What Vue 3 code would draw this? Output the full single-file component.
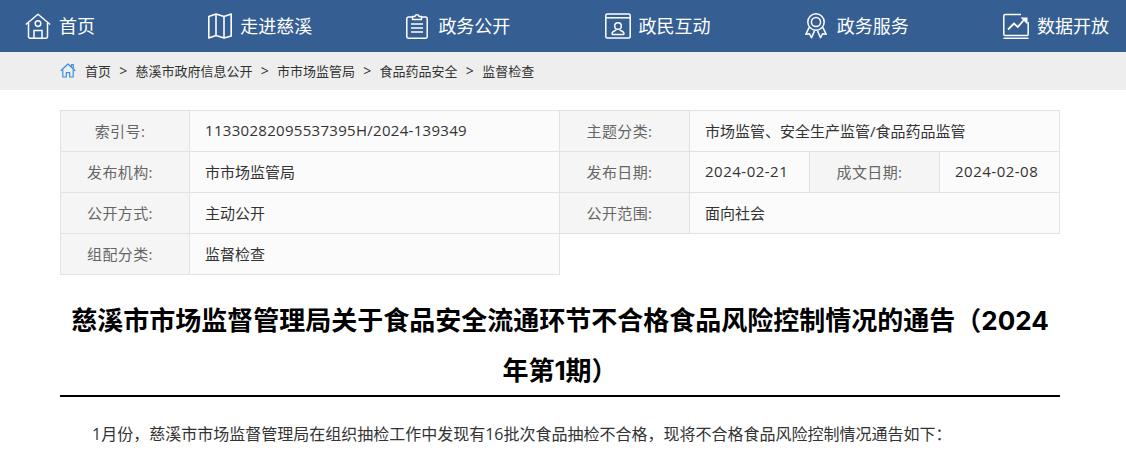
<script setup>
const rows = [
  { cells: [
    { t: '索引号:', l: true, c: 'a' },
    { t: '11330282095537395H/2024-139349', c: 'b code' },
    { t: '主题分类:', l: true, c: 'a' },
    { t: '市场监管、安全生产监管/食品药品监管', c: 'w' }
  ] },
  { cells: [
    { t: '发布机构:', l: true, c: 'a' },
    { t: '市市场监管局', c: 'b' },
    { t: '发布日期:', l: true, c: 'a' },
    { t: '2024-02-21', c: 'd' },
    { t: '成文日期:', l: true, c: 'a' },
    { t: '2024-02-08', c: 'd' }
  ] },
  { cells: [
    { t: '公开方式:', l: true, c: 'a' },
    { t: '主动公开', c: 'b' },
    { t: '公开范围:', l: true, c: 'a' },
    { t: '面向社会', c: 'w' }
  ] },
  { cells: [
    { t: '组配分类:', l: true, c: 'a' },
    { t: '监督检查', c: 'b' }
  ] }
]
const crumbs = ['慈溪市政府信息公开', '市市场监管局', '食品药品安全', '监督检查']
</script>

<template>
  <div class="page">
    <nav class="nav">
      <a class="item first">
        <svg class="ico" viewBox="0 0 26 26" fill="none" stroke="#fff" stroke-width="1.5">
          <path d="M.8 11.5 13 1.2l12.2 10.3" stroke-linejoin="round" />
          <path d="M3.5 10v13.8a1.4 1.4 0 0 0 1.4 1.4h16.2a1.4 1.4 0 0 0 1.4-1.4V10" />
          <circle cx="13" cy="10.6" r="2.8" />
          <path d="M9 25v-7.5h8V25" />
        </svg>
        <span>首页</span>
      </a>
      <a class="item">
        <svg class="ico map" viewBox="0 0 24 26" fill="none" stroke="#fff" stroke-width="1.6" stroke-linejoin="round">
          <path d="M.8 3.4 8 1l8 2.4L23.2 1v22L16 25l-8-2.4L.8 25z" />
          <path d="M8 1v21.6M16 3.4V25" />
        </svg>
        <span>走进慈溪</span>
      </a>
      <a class="item">
        <svg class="ico clip" viewBox="0 0 22 26" fill="none" stroke="#fff" stroke-width="1.5">
          <path d="M6.5 4H2.6A1.8 1.8 0 0 0 .8 5.8v18a1.4 1.4 0 0 0 1.4 1.4h17.6a1.4 1.4 0 0 0 1.4-1.4v-18A1.8 1.8 0 0 0 19.4 4h-3.900" />
          <path d="M6.500 6.500V3.500h2.300a2.300 2.300 0 0 1 4.400 0h2.300v3z" stroke-linejoin="round" />
          <path d="M5 11h12M5 15h12M5 19h12" stroke-width="1.700" />
        </svg>
        <span>政务公开</span>
      </a>
      <a class="item">
        <svg class="ico" viewBox="0 0 26 26" fill="none" stroke="#fff" stroke-width="1.5">
          <rect x=".8" y="1" width="24.400" height="24" rx="1.500" />
          <path d="M.8 4.800h24.400" />
          <circle cx="13" cy="13" r="3.300" />
          <path d="M7 21.500v-.8c0-2 2.500-3 4.300-3.700M19 21.500v-.8c0-2-2.500-3-4.300-3.700M7 21.500h12" />
        </svg>
        <span>政民互动</span>
      </a>
      <a class="item">
        <svg class="ico award" viewBox="0 0 22 26" fill="none" stroke="#fff" stroke-width="1.500">
          <circle cx="11" cy="9" r="8.200" />
          <circle cx="11" cy="9" r="4.600" />
          <path d="M4.300 14.200.8 21.300l3.700-.5 2 3.900 3-6.800M17.700 14.200l3.500 7.100-3.700-.5-2 3.900-3-6.800" stroke-linejoin="round" />
        </svg>
        <span>政务服务</span>
      </a>
      <a class="item">
        <svg class="ico" viewBox="0 0 26 26" fill="none" stroke="#fff" stroke-width="1.500">
          <path d="M18 1.500H2.200A1.400 1.400 0 0 0 .8 2.900v18.300a1.400 1.400 0 0 0 1.400 1.400h21.600a1.400 1.400 0 0 0 1.400-1.400V9" />
          <path d="M5 16.500l6-6 3.800 3.500 6-7" stroke-width="1.800" />
          <path d="M17.500 4.500h7v7z" fill="#fff" stroke="none" />
          <path d="M.5 25.300h25" stroke-width="1.500" />
        </svg>
        <span>数据开放</span>
      </a>
    </nav>

    <div class="crumb">
      <svg class="home" viewBox="0 0 16 15" fill="none" stroke="#3b8fdc" stroke-width="1.200" stroke-linejoin="round">
        <path d="M.7 7.800 8 1l7.300 6.800" />
        <path d="M11.500 3.700V1.600h1.800v3.800" />
        <path d="M2.800 6.500v7.500h3.500V9.700h3.400V14h3.500V6.500" />
      </svg>
      <span class="cr">首页</span>
      <template v-for="c in crumbs" :key="c">
        <span class="sep">&gt;</span>
        <span class="cr">{{ c }}</span>
      </template>
    </div>

    <main class="main">
      <div class="table">
        <template v-for="(r, i) in rows" :key="i">
          <div
            v-for="(cell, j) in r.cells"
            :key="j"
            class="cell"
            :class="[cell.c, { label: cell.l, top: i === 0, left: j === 0 }]"
          >{{ cell.t }}</div>
        </template>
      </div>

      <h1 class="title">慈溪市市场监督管理局关于食品安全流通环节不合格食品风险控制情况的通告（2024年第1期）</h1>

      <p class="para">1月份，慈溪市市场监督管理局在组织抽检工作中发现有16批次食品抽检不合格，现将不合格食品风险控制情况通告如下：</p>
    </main>
  </div>
</template>

<style>
html, body { margin: 0; background: #fff; overflow: hidden; }
</style>

<style scoped>
.page {
  width: 1126px;
  height: 451px;
  overflow: hidden;
  font-family: "Open Sans", "Noto Sans CJK SC", sans-serif;
}
.nav {
  display: flex;
  justify-content: space-between;
  align-items: center;
  height: 52px;
  padding: 0 17px 0 25px;
  background: #355e92;
  box-sizing: border-box;
}
.item {
  display: flex;
  align-items: center;
  gap: 8px;
  color: #fff;
  font-size: 18px;
  white-space: nowrap;
}
.item span { margin-bottom: 2px; }
.first { width: 70px; margin-right: 19px; }
.ico { width: 26px; height: 26px; flex: none; }
.map { width: 24px; }
.clip { width: 22px; margin-right: 2px; }
.award { width: 22px; margin-right: 2px; }
.crumb {
  display: flex;
  align-items: center;
  height: 38px;
  padding: 0 0 2px 60px;
  box-sizing: border-box;
  background: #eee;
  font-size: 13px;
  color: #333;
}
.home { width: 16px; height: 15px; margin-right: 9px; }
.sep { margin: 0 8.25px; font-size: 14px; }
.main { width: 1000px; margin: 0 auto 0 60px; }
.table {
  display: grid;
  grid-template-columns: 130px 370px 130px 120px 130px 120px;
  grid-template-rows: 42px 41px 41px 41px;
  margin-top: 20px;
  font-size: 15px;
  color: #333;
}
.cell {
  display: flex;
  align-items: center;
  box-sizing: border-box;
  padding: 0 0 2px 15px;
  background: #fbfbfb;
  border-right: 1px solid #e2e2e2;
  border-bottom: 1px solid #e2e2e2;
  white-space: nowrap;
}
.top { border-top: 1px solid #e2e2e2; }
.left { border-left: 1px solid #e2e2e2; }
.code { letter-spacing: .3px; }
.d { letter-spacing: .5px; }
.label {
  justify-content: center;
  padding: 0 10px 2px 0;
  background: #f5f5f5;
  color: #666;
  letter-spacing: .4px;
}
.w { grid-column: span 3; }
.title {
  margin: 21px 0 0;
  height: 99px;
  border-bottom: 2px solid #000;
  box-sizing: content-box;
  font-family: "Inter", "Noto Sans CJK SC", sans-serif;
  font-size: 26px;
  font-weight: 700;
  line-height: 50px;
  text-align: center;
  color: #000;
}
.para {
  margin: 23px 0 0;
  text-indent: 32px;
  font-size: 16px;
  line-height: 28px;
  color: #333;
}
</style>
